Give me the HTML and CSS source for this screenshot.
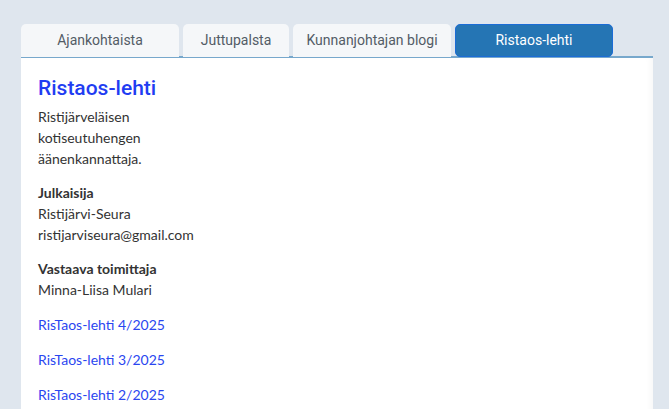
FILE: index.html
```html
<!DOCTYPE html>
<html lang="fi">
<head>
  <meta charset="UTF-8">
  <meta name="viewport" content="width=device-width, initial-scale=1.0">
  <title>Ristaos-lehti</title>
  <link rel="stylesheet" href="styles.css">
</head>
<body>

  <div class="wrap">
    <div class="tabs">
      <a href="#" class="tab">Ajankohtaista</a>
      <a href="#" class="tab tab-short">Juttupalsta</a>
      <a href="#" class="tab">Kunnanjohtajan blogi</a>
      <a href="#" class="tab active">Ristaos-lehti</a>
    </div>

    <div class="panel">
      <h1 class="title">Ristaos-lehti</h1>
      <p class="intro">Ristijärveläisen<br>kotiseutuhengen<br>äänenkannattaja.</p>

      <p><strong>Julkaisija</strong><br>Ristijärvi-Seura<br>ristijarviseura@gmail.com</p>

      <p><strong>Vastaava toimittaja</strong><br>Minna-Liisa Mulari</p>

      <p class="issue"><a href="#">RisTaos-lehti 4/2025</a></p>
      <p class="issue"><a href="#">RisTaos-lehti 3/2025</a></p>
      <p class="issue"><a href="#">RisTaos-lehti 2/2025</a></p>
    </div>
  </div>

</body>
</html>
```

FILE: styles.css
```css
body {
  margin: 0;
  background-color: #dfe6ee;
  font-family: Lato, "Open Sans", sans-serif;
  overflow: hidden;
}

.wrap {
  width: 632px;
  padding: 24px 0 0 21px;
}

.tabs {
  display: flex;
  gap: 4px;
  border-bottom: 2px solid #77a8cc;
}

.tab {
  display: block;
  width: 158px;
  height: 33px;
  line-height: 33px;
  text-align: center;
  background-color: #f5f7f9;
  color: #535c66;
  font-family: Roboto, sans-serif;
  font-size: 14px;
  text-decoration: none;
  border-radius: 5px 5px 0 0;
  margin-bottom: -1px;
}

.tab-short {
  width: 106px;
}

.tab.active {
  width: 156px;
  height: 31px;
  line-height: 31px;
  background-color: #2575b4;
  border: 1px solid #1b6cd6;
  border-radius: 5px;
  color: #fff;
  margin-bottom: -2px;
}

.panel {
  background-color: #fff;
  padding: 16px 17px 20px;
  color: #333;
  font-size: 14px;
  line-height: 21px;
  box-shadow: inset -6px 0 8px -6px rgba(0, 0, 0, 0.06);
}

.title {
  margin: 0 0 4px;
  font-family: Roboto, sans-serif;
  font-weight: 500;
  font-size: 21px;
  line-height: 28px;
  color: #1f3df2;
}

.panel p {
  margin: 0 0 13px;
}

.panel p.issue {
  margin-top: 14px;
}

.panel strong {
  font-weight: 700;
}

.panel a {
  color: #2a46f0;
  text-decoration: none;
}
```
